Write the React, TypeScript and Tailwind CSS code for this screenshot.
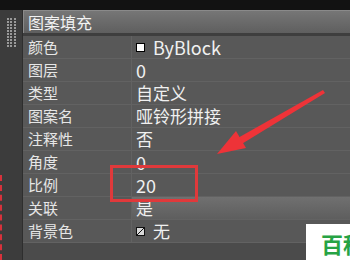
const rows: { label: string; value: string; kind?: "color" | "hatch" | "combo" }[] = [
  { label: "颜色", value: "ByBlock", kind: "color" },
  { label: "图层", value: "0" },
  { label: "类型", value: "自定义" },
  { label: "图案名", value: "哑铃形拼接" },
  { label: "注释性", value: "否" },
  { label: "角度", value: "0" },
  { label: "比例", value: "20" },
  { label: "关联", value: "是", kind: "combo" },
  { label: "背景色", value: "无", kind: "hatch" },
];

function Grip() {
  return (
    <div className="ml-[7px] mt-[8px] grid w-[9px] grid-cols-3 gap-[1px]">
      {Array.from({ length: 30 }).map((_, i) => (
        <div key={i} className="h-[2px] w-[2px] bg-[#9a9a9a]" />
      ))}
    </div>
  );
}

function Row({ label, value, kind }: (typeof rows)[number]) {
  const isLatin = /^[0-9A-Za-z]+$/.test(value);
  return (
    <div className="flex h-[23px] border-b border-[#626262]">
      <div className="flex w-[108px] items-center pl-[5px] text-[15px] leading-[22px] text-[#e6e6e6]">
        {label}
      </div>
      <div
        className={
          "flex flex-1 items-center border-l border-[#626262] pl-[4px] text-[#f0f0f0] " +
          (kind === "combo" ? "bg-gradient-to-b from-[#707070] to-[#5e5e5e]" : "")
        }
      >
        {kind === "color" && (
          <div className="mr-[8px] h-[9px] w-[9px] border border-black bg-white" />
        )}
        {kind === "hatch" && (
          <svg width="9" height="9" viewBox="0 0 9 9" className="mr-[8px]">
            <rect x="0.5" y="0.5" width="8" height="8" fill="#d8d8d8" stroke="#111" />
            <line x1="1" y1="8" x2="8" y2="1" stroke="#111" />
          </svg>
        )}
        <span className={isLatin ? "text-[18px] leading-[22px]" : "text-[17px] leading-[22px]"}>
          {value}
        </span>
      </div>
    </div>
  );
}

export default function App() {
  return (
    <div className="relative h-[260px] w-[350px] overflow-hidden bg-[#4b4b4b] font-['Noto_Sans_CJK_SC',sans-serif]">
      <div className="h-[10px] bg-[#121212]" />
      <div className="flex h-[250px]">
        <div className="flex w-[22px] flex-col bg-[#3c3c3c]">
          <Grip />
          <div className="mt-auto h-[85px] border-l-2 border-dashed border-[#d8323c]" />
        </div>
        <div className="flex flex-1 flex-col border-l border-[#2e2e2e]">
          <div className="flex h-[23px] items-center border-t border-l border-[#8a8a8a] bg-gradient-to-b from-[#767676] to-[#5f5f5f] pl-[4px] text-[16px] leading-[22px] text-[#f2f2f2]">
            图案填充
          </div>
          <div className="h-[3px] bg-[#3e3e3e]" />
          <div className="bg-[#585858]">
            {rows.map((r) => (
              <Row key={r.label} {...r} />
            ))}
          </div>
        </div>
      </div>

      <div className="absolute left-[110px] top-[165px] h-[37px] w-[88px] border-[3px] border-[#e0393b]" />

      <svg className="absolute left-0 top-0" width="350" height="260" viewBox="0 0 350 260">
        <polygon points="323,90 325,93 240,145 236,139" fill="#ee3338" />
        <polygon points="217,154 236,131 246,148" fill="#ee3338" />
      </svg>

      <div className="absolute left-[306px] top-[224px] flex h-[40px] w-[50px] items-start bg-white pl-[15px] pt-[8px]">
        <span className="whitespace-nowrap text-[22px] font-bold leading-none text-[#27a344]">
          百科
        </span>
      </div>
    </div>
  );
}
